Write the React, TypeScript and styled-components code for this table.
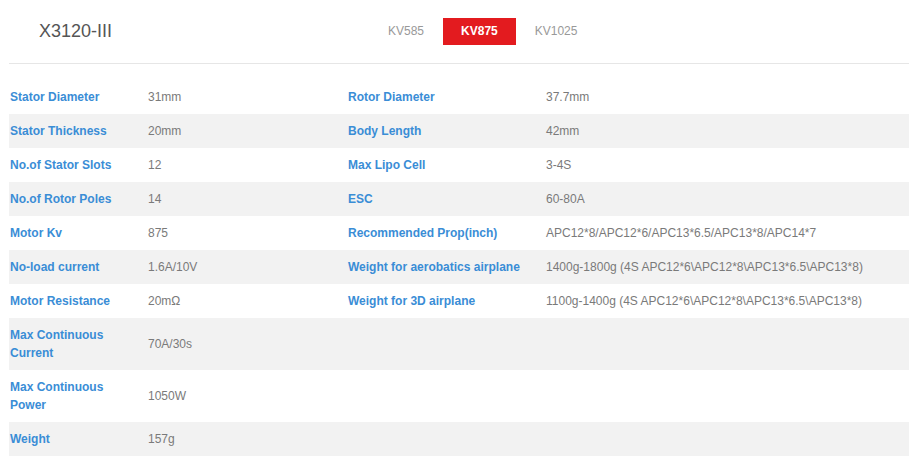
import React from "react";
import styled, { createGlobalStyle } from "styled-components";

const Global = createGlobalStyle`
  html, body { margin: 0; padding: 0; background: #fff; }
  body { font-family: "Liberation Sans", Arial, sans-serif; }
`;

const Page = styled.div`
  width: 900px;
  padding: 0 5px 0 9px;
  font-family: "Liberation Sans", Arial, sans-serif;
`;

const Header = styled.div`
  display: flex;
  align-items: center;
  height: 63px;
  border-bottom: 1px solid #e6e6e6;
`;

const Title = styled.div`
  width: 331px;
  padding-left: 30px;
  font-size: 18px;
  color: #555;
  line-height: 24px;
  margin-top: -2px;
`;

const Tabs = styled.div`
  display: flex;
  gap: 1px;
`;

const Tab = styled.div<{ $active?: boolean }>`
  height: 27px;
  line-height: 27px;
  padding: 0 18px;
  font-size: 12px;
  color: ${(p) => (p.$active ? "#fff" : "#999")};
  background: ${(p) => (p.$active ? "#e31b1f" : "transparent")};
  font-weight: ${(p) => (p.$active ? "bold" : "normal")};
`;

const Table = styled.table`
  margin-top: 16px;
  width: 900px;
  border-collapse: collapse;
  table-layout: fixed;
`;

const Row = styled.tr<{ $striped: boolean }>`
  background: ${(p) => (p.$striped ? "#f2f2f2" : "#fff")};
`;

const Label = styled.td`
  padding: 8px 10px 8px 1px;
  font-size: 12px;
  line-height: 18px;
  font-weight: bold;
  color: #3a8dd6;
  vertical-align: middle;
`;

const Value = styled.td`
  padding: 8px 0 8px 2px;
  font-size: 12px;
  line-height: 18px;
  color: #7a7a7a;
  vertical-align: middle;
`;

const rows: [string, string, string, string][] = [
  ["Stator Diameter", "31mm", "Rotor Diameter", "37.7mm"],
  ["Stator Thickness", "20mm", "Body Length", "42mm"],
  ["No.of Stator Slots", "12", "Max Lipo Cell", "3-4S"],
  ["No.of Rotor Poles", "14", "ESC", "60-80A"],
  ["Motor Kv", "875", "Recommended Prop(inch)", "APC12*8/APC12*6/APC13*6.5/APC13*8/APC14*7"],
  ["No-load current", "1.6A/10V", "Weight for aerobatics airplane", "1400g-1800g (4S APC12*6\\APC12*8\\APC13*6.5\\APC13*8)"],
  ["Motor Resistance", "20mΩ", "Weight for 3D airplane", "1100g-1400g (4S APC12*6\\APC12*8\\APC13*6.5\\APC13*8)"],
  ["Max Continuous Current", "70A/30s", "", ""],
  ["Max Continuous Power", "1050W", "", ""],
  ["Weight", "157g", "", ""],
];

export default function App() {
  return (
    <>
      <Global />
      <Page>
        <Header>
          <Title>X3120-III</Title>
          <Tabs>
            <Tab>KV585</Tab>
            <Tab $active>KV875</Tab>
            <Tab>KV1025</Tab>
          </Tabs>
        </Header>
        <Table>
          <colgroup>
            <col style={{ width: 137 }} />
            <col style={{ width: 201 }} />
            <col style={{ width: 197 }} />
            <col />
          </colgroup>
          <tbody>
            {rows.map((r, i) => (
              <Row key={i} $striped={i % 2 === 1}>
                <Label>{r[0]}</Label>
                <Value>{r[1]}</Value>
                <Label>{r[2]}</Label>
                <Value>{r[3]}</Value>
              </Row>
            ))}
          </tbody>
        </Table>
      </Page>
    </>
  );
}
